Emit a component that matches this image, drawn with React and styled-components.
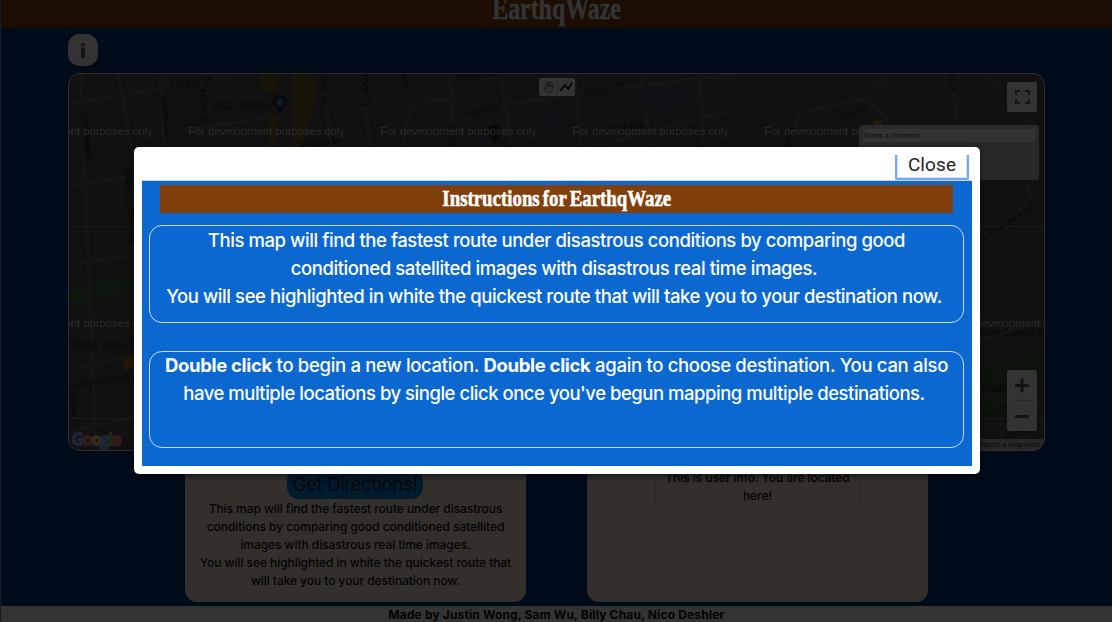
import React from "react";
import styled, { createGlobalStyle } from "styled-components";

const Global = createGlobalStyle`
  * { box-sizing: border-box; }
  body { margin: 0; background: #000b19; overflow: hidden; font-family: Inter, "Liberation Sans", sans-serif; }
  p, h1, h2 { margin: 0; }
`;

const Page = styled.div`
  height: 622px;
  display: flex;
  flex-direction: column;
  background: #000b19;
  border-left: 1px solid #141c25;
`;

const Header = styled.header`
  height: 28px;
  flex: none;
  display: flex;
  justify-content: center;
  background: #1b0d02;
  overflow: hidden;
`;

const Display = styled.span`
  display: block;
  white-space: nowrap;
  font-family: "Liberation Serif", serif;
  font-weight: 700;
  font-size: ${(p) => p.$size}px;
  line-height: ${(p) => p.$line}px;
  word-spacing: -2px;
  color: ${(p) => p.$color};
  transform: scaleX(${(p) => p.$squeeze});
  -webkit-text-stroke: 0.6px ${(p) => p.$color};
`;

const InfoButton = styled.button`
  width: 30px;
  height: 32px;
  margin: 6px 0 7px 67px;
  padding: 0;
  flex: none;
  border: 0;
  border-radius: 12px;
  background: #333;
  display: grid;
  place-items: center;
`;

const MapFrame = styled.section`
  position: relative;
  width: 977px;
  height: 378px;
  margin-left: 67px;
  flex: none;
  border: 1px solid #2d2d2f;
  border-radius: 12px;
  background: #111;
  overflow: hidden;
`;

const MapArt = styled.svg`
  display: block;
`;

const DrawTools = styled.div`
  position: absolute;
  left: 470px;
  top: 4px;
  width: 36px;
  height: 18px;
  display: flex;
  border-radius: 2px;
  background: #333;
`;

const Control = styled.button`
  position: absolute;
  left: 938px;
  top: ${(p) => p.$top}px;
  width: 30px;
  height: ${(p) => p.$height}px;
  padding: 0;
  border: 0;
  border-radius: 2px;
  background: #333;
`;

const SearchPanel = styled.div`
  position: absolute;
  left: 790px;
  top: 51px;
  width: 180px;
  height: 55px;
  padding: 4px;
  border-radius: 3px;
  background: #292929;
`;

const SearchField = styled.div`
  width: 172px;
  height: 13px;
  padding-left: 1px;
  background: #333;
  color: #0d0d0d;
  font: 8px/13px Roboto, sans-serif;
`;

const MapError = styled.div`
  position: absolute;
  right: 0;
  bottom: 0;
  width: 80px;
  height: 11px;
  padding-right: 4px;
  background: #272727;
  color: #0a0a0a;
  font: 7.3px/11px Roboto, sans-serif;
  text-align: right;
  white-space: nowrap;
`;

const Cards = styled.div`
  display: flex;
  gap: 61px;
  margin: 9px 0 4px 184px;
  height: 142px;
  flex: none;
`;

const Card = styled.article`
  width: 341px;
  padding-top: ${(p) => p.$top}px;
  border-radius: 12px;
  background: #33302c;
  display: flex;
  flex-direction: column;
  align-items: center;
`;

const Pill = styled.div`
  width: 136px;
  height: 30px;
  margin: 0 1px 1px 0;
  flex: none;
  border-radius: 12px;
  background: #001b2c;
  color: #030609;
  font-size: 18.5px;
  letter-spacing: -0.3px;
  line-height: 31px;
  text-align: center;
  white-space: nowrap;
`;

const Copy = styled.p`
  color: #030303;
  font-size: 12px;
  font-weight: 450;
  line-height: 18px;
  letter-spacing: -0.06px;
  text-align: center;
  white-space: nowrap;
`;

const UserInfo = styled.div`
  width: 205px;
  height: 45px;
  padding-top: 7px;
  border: 1px solid #2a2a2a;
`;

const Footer = styled.footer`
  height: 16px;
  background: #333;
  color: #020202;
  font-size: 12px;
  font-weight: 700;
  line-height: 18px;
  letter-spacing: 0.15px;
  text-align: center;
  overflow: hidden;
`;

const Dialog = styled.div`
  position: absolute;
  left: 134px;
  top: 147px;
  width: 846px;
  height: 327px;
  padding: 8px;
  border-radius: 5px;
  background: #fff;
  box-shadow: 0 2px 7px rgba(0, 0, 0, 0.6);
`;

const DialogBar = styled.div`
  height: 26px;
  display: flex;
  justify-content: flex-end;
  padding-right: 3px;
  border-bottom: 1px solid #d4d4d4;
`;

const CloseButton = styled.button`
  width: 74px;
  height: 25px;
  padding: 0 0 4px;
  border: 2px solid #73a7f8;
  border-top: 0;
  border-radius: 0 0 2px 2px;
  background: #fff;
  box-shadow: inset 0 -1px 0 #d5e3f9, inset 1px 0 0 #d5e3f9, inset -1px 0 0 #d5e3f9;
  color: #222;
  font: 400 19px/19px Roboto, sans-serif;
  letter-spacing: 0.1px;
`;

const DialogBody = styled.div`
  height: 285px;
  padding: 4px 8px 0 7px;
  background: #0b68d0;
`;

const Banner = styled.h2`
  height: 28px;
  margin: 0 11px 12px 11px;
  display: flex;
  justify-content: center;
  background: #803f0b;
`;

const Note = styled.div`
  height: ${(p) => p.$height}px;
  margin-bottom: 28px;
  border: 1px solid #c9dcf4;
  border-radius: 13px;
  color: #fff;
  display: flex;
  flex-direction: column;
  align-items: center;
`;

const Line = styled.p`
  font-size: 18.5px;
  font-weight: 450;
  line-height: ${(p) => p.$leading || 29}px;
  height: 28px;
  padding-right: ${(p) => (p.$last ? 5 : 0)}px;
  letter-spacing: ${(p) => p.$track || -0.42}px;
  white-space: nowrap;
`;

const Road = ({ d, w = 3 }) => (
  <path d={d} fill="none" stroke="#151515" strokeWidth={w} />
);

const Label = ({ x, y, r = 0, size = 9, children }) => (
  <text
    transform={`translate(${x} ${y}) rotate(${r})`}
    fontFamily="Roboto, sans-serif"
    fontSize={size}
    fill="#070707"
  >
    {children}
  </text>
);

const watermarks = [
  [-4, 135], [188, 135], [380, 135], [572, 135], [764, 135],
  [-4, 327], [956, 327],
];

function StreetMap() {
  return (
    <MapArt width="975" height="376" viewBox="69 74 975 376">
      <path d="M260 74h18v20l-16-4zM291 74h20q10 14 4 30l-8 22-4 21h-10zM270 115h9l-3 32h-7z" fill="#19140a" />
      <path d="M69 293l48-17 17 7v8l-65 12z" fill="#0c160c" />
      <path d="M980 372q20-10 64-17v22l-64 18zM980 402l40-18v27l-40 9z" fill="#0c130b" />
      <path d="M124 355h10v14h-10zM874 120h8v5h-8z" fill="#241706" />
      <Road d="M69 104L230 76M69 186l65-10M69 265l65-10M69 370l65-15M69 432l65-15" />
      <Road d="M81 74l15 376M118 74l14 73M160 74l4 73" />
      <Road d="M180 131l90-14M325 74l5 73M362 74l8 73" />
      <Road d="M405 147q-5-50 40-48 l15 6M450 74l4 73M500 74l12 73" />
      <Road d="M460 112l115-18 160-20M575 74l6 73M640 74l12 73M700 74l4 73" />
      <Road d="M590 147l140-36M790 147l8-34 70-15 20-24M868 98l30 35M954 74l2 70M985 74l55 60" />
      <Road d="M1024 180l8 20M985 250q15-30 44-46M980 340l64-20" />
      <path d="M69 226.500h65M69 418.500h65M980 226.500h64M980 418.500h64" stroke="#1b1b1b" />
      <path d="M470 130h34v17h-38zM545 110h28v15h-28zM640 88h45v20h-42z" fill="#101115" />
      <Label x={172} y={90} r={-8} size={11}>Cedar St</Label>
      <Label x={212} y={109} size={11}>ACCI Gallery</Label>
      <Label x={160} y={96} r={83}>Bonita Ave</Label>
      <Label x={200} y={89} r={88}>Milvia St</Label>
      <Label x={81} y={111} r={84}>Josephine St</Label>
      <Label x={320} y={66} r={85}>Walnut St</Label>
      <Label x={361} y={74} r={87} size={11}>ford St</Label>
      <Label x={300} y={148} r={-8}>Virginia St</Label>
      <Label x={400} y={64} r={85}>ose St</Label>
      <Label x={457} y={80} r={-6}>Hilgard Ave</Label>
      <Label x={460} y={116} r={-8}>Virginia St</Label>
      <Label x={585} y={96} r={-10}>Virginia St</Label>
      <Label x={592} y={134} r={-7}>Le Conte Ave</Label>
      <Label x={449} y={123} r={87}>Arch St</Label>
      <Label x={841} y={121} r={-23}>Chu Rd</Label>
      <Label x={956} y={93} r={-90}>McMillan</Label>
      <Label x={789} y={152} r={-78}>Le Roy</Label>
      <Label x={125} y={170} r={86}>Martin Luther King</Label>
      <Label x={84} y={137} r={88}>ne St</Label>
      <Label x={69} y={348} size={10.5}>Trader Joe's</Label>
      <Label x={71} y={389} r={-10} size={9.500}>University Ave</Label>
      <Label x={69} y={394} r={82}>Bonar St</Label>
      <Label x={992} y={237} r={-35}>Lawrence Rd</Label>
      <Label x={979} y={336} size={9.500}>berry Canyon Rd</Label>
      <Label x={981} y={392} size={10}>Stadium</Label>
      <Label x={984} y={421} r={-30}>Canyon Rd</Label>
      <Label x={1008} y={440} r={-24}>Prospect</Label>
      <path d="M280 114q-1-4-5-7a7 7 0 1 1 10 0q-4 3-5 7z" fill="#040a0d" />
      <circle cx="280" cy="102" r="3.500" fill="#141b1c" />
      <path d="M494 144q-1-5-4-7a7 7 0 1 1 9 0q-4 2-5 7z" fill="#080808" />
      <circle cx="135" cy="342" r="6" fill="#080c18" />
      {watermarks.map(([x, y]) => (
        <text key={`${x}-${y}`} x={x} y={y} textLength="157" fontFamily="Liberation Sans, sans-serif" fontSize="11.500" fill="#2b2b2b">
          For development purposes only
        </text>
      ))}
      <text x="72" y="445" textLength="49" fontFamily="Open Sans, sans-serif" fontWeight="600" fontSize="16" stroke="#222" strokeWidth="2" paintOrder="stroke">
        <tspan fill="#172946">G</tspan><tspan fill="#431713">o</tspan><tspan fill="#40320c">o</tspan><tspan fill="#172946">g</tspan><tspan fill="#123119">l</tspan><tspan fill="#431713">e</tspan>
      </text>
    </MapArt>
  );
}

export default function App() {
  return (
    <>
      <Global />
      <Page>
        <Header>
          <Display as="h1" $size={31} $line={18} $color="#333" $squeeze={0.77}>EarthqWaze</Display>
        </Header>
        <InfoButton aria-label="Instructions">
          <svg width="6" height="16" viewBox="0 0 6 16" fill="#151515"><path d="M1 1h4v3H1zM1 5.500h4V16H1z" /></svg>
        </InfoButton>
        <MapFrame>
          <StreetMap />
          <DrawTools>
            <svg width="36" height="18" fill="none">
              <path d="M7 14l-2-4q0-1 1.500 0L8 11 6 6q1-1 2 1l1 2-1-5q1-1 2 1v4l1-5q1-1 1 1v4l2-3q1 0 0 2l-1 4-1 2z" stroke="#151515" strokeWidth=".8" />
              <path d="M18 1v16" stroke="#2c2c2c" />
              <path d="M21 13l5-6 3 4 4-6" stroke="#000" strokeWidth="1.600" />
            </svg>
          </DrawTools>
          <Control $top={8} $height={30} aria-label="Full screen">
            <svg width="30" height="30" fill="none" stroke="#151515" strokeWidth="2"><path d="M9 13V9h4M18 9h4v4M22 17v4h-4M13 21H9v-4" /></svg>
          </Control>
          <SearchPanel><SearchField>Enter a location</SearchField></SearchPanel>
          <Control $top={296} $height={61} aria-label="Zoom">
            <svg width="30" height="61" fill="none" stroke="#141414" strokeWidth="3"><path d="M8 15.500h14M15 8.500v14M8 46.500h14" /><path d="M4 30.500h22" stroke="#292929" strokeWidth="1" /></svg>
          </Control>
          <MapError>Report a map error</MapError>
        </MapFrame>
        <Cards>
          <Card $top={9}>
            <Pill>Get Directions!</Pill>
            <Copy>This map will find the fastest route under disastrous</Copy>
            <Copy>conditions by comparing good conditioned satellited</Copy>
            <Copy>images with disastrous real time images.</Copy>
            <Copy>You will see highlighted in white the quickest route that</Copy>
            <Copy>will take you to your destination now.</Copy>
          </Card>
          <Card $top={1}>
            <UserInfo>
              <Copy>This is user info. You are located</Copy>
              <Copy>here!</Copy>
            </UserInfo>
          </Card>
        </Cards>
        <Footer>Made by Justin Wong, Sam Wu, Billy Chau, Nico Deshler</Footer>
      </Page>
      <Dialog role="dialog">
        <DialogBar><CloseButton>Close</CloseButton></DialogBar>
        <DialogBody>
          <Banner>
            <Display $size={24} $line={27} $color="#fff" $squeeze={0.785}>Instructions for EarthqWaze</Display>
          </Banner>
          <Note $height={98}>
            <Line>This map will find the fastest route under disastrous conditions by comparing good</Line>
            <Line $last>conditioned satellited images with disastrous real time images.</Line>
            <Line $last>You will see highlighted in white the quickest route that will take you to your destination now.</Line>
          </Note>
          <Note $height={97}>
            <Line $leading={27} $track={-0.32}><b>Double click</b> to begin a new location. <b>Double click</b> again to choose destination. You can also</Line>
            <Line $last $leading={27} $track={-0.48}>have multiple locations by single click once you've begun mapping multiple destinations.</Line>
          </Note>
        </DialogBody>
      </Dialog>
    </>
  );
}
